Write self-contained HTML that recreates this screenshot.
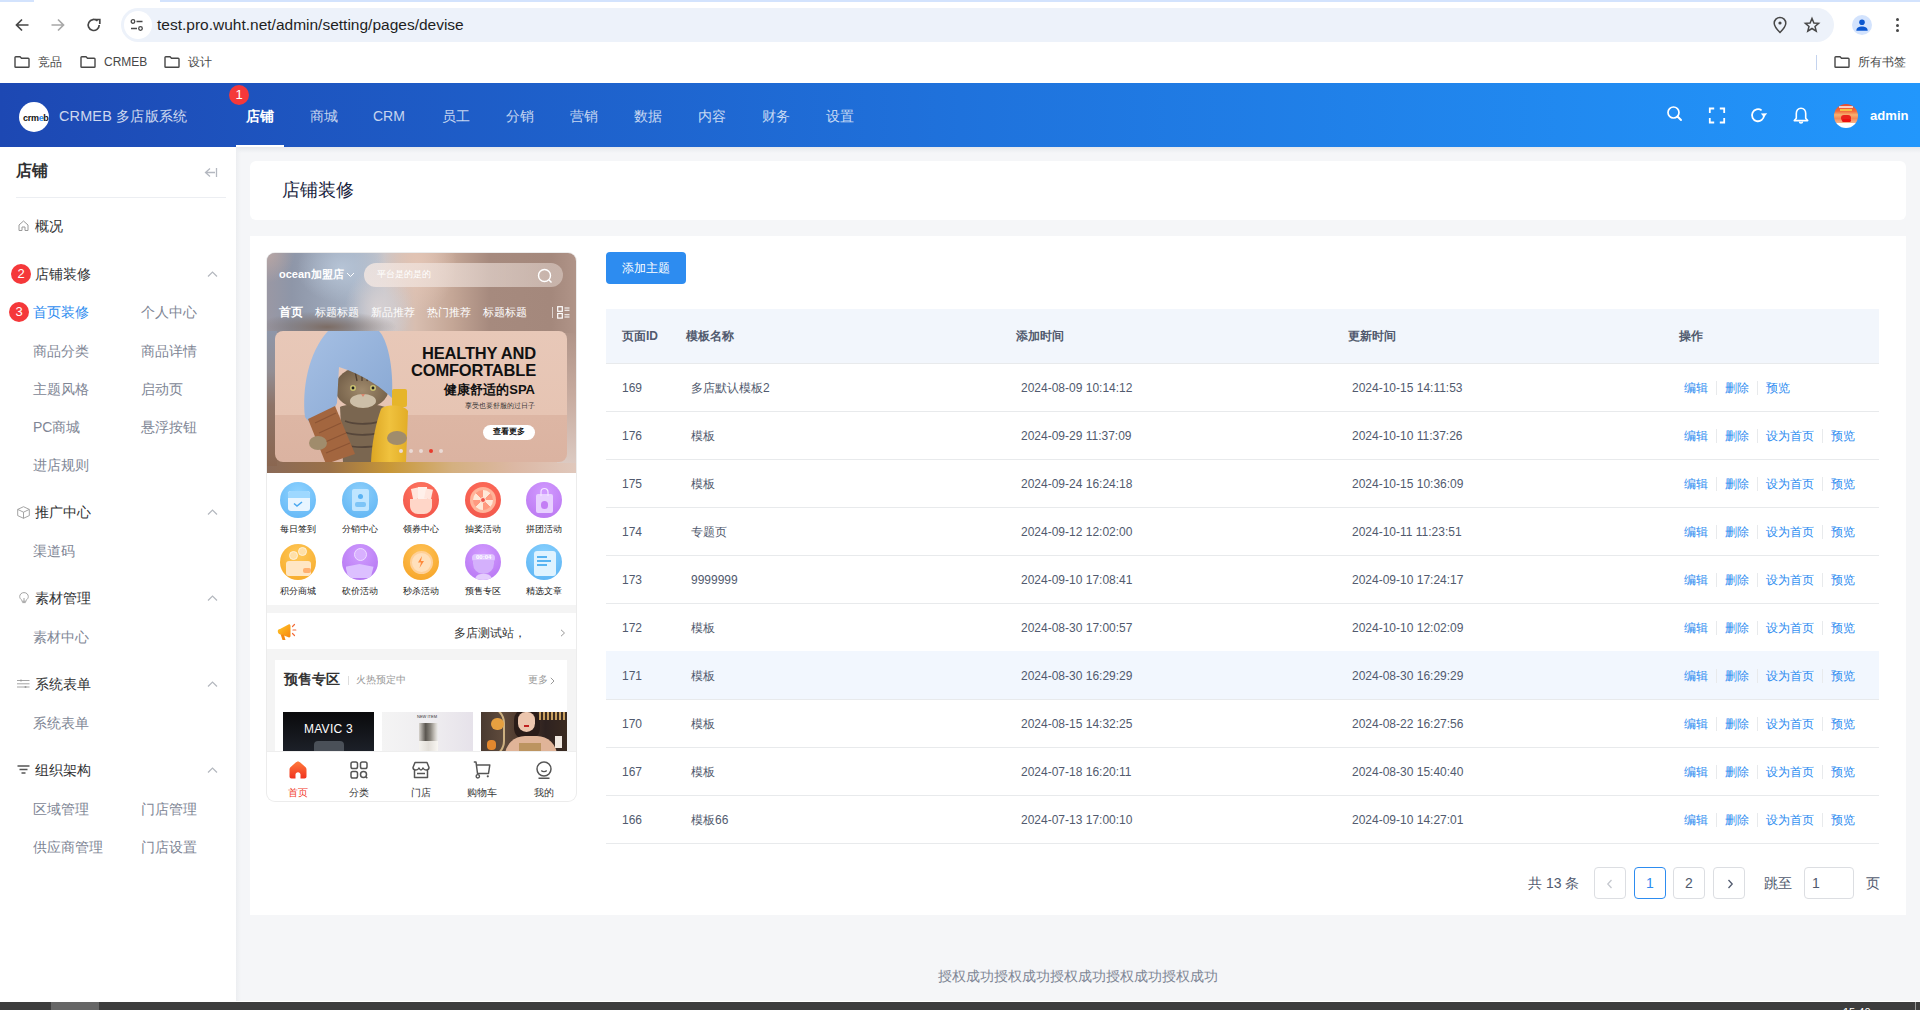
<!DOCTYPE html>
<html><head><meta charset="utf-8">
<style>
*{margin:0;padding:0;box-sizing:border-box}
html,body{width:1920px;height:1010px;overflow:hidden;background:#f5f6f8;font-family:"Liberation Sans",sans-serif;position:relative}
.a{position:absolute}
.t{position:absolute;white-space:nowrap;line-height:1}
svg{position:absolute;overflow:visible}
/* browser chrome */
#chrome{left:0;top:0;width:1920px;height:83px;background:#fff}
#tabstrip{left:0;top:0;width:1920px;height:2px;background:#d3e3fd}
#addr{left:121px;top:8px;width:1713px;height:34px;border-radius:17px;background:#edf2fa}
#header{left:0;top:83px;width:1920px;height:64px;background:linear-gradient(90deg,#1d48b3 0%,#1f72dc 50%,#2297fc 100%)}
#side{left:0;top:147px;width:236px;height:854px;background:#fff}
#taskbar{left:0;top:1002px;width:1920px;height:8px;background:#3d3d3d;overflow:hidden}
.si{font-size:14px}
.sub{color:#808695}
.badge{width:20px;height:20px;border-radius:10px;background:#f5383a;color:#fff;font-size:13px;line-height:20px;text-align:center}
.th{font-size:12px;font-weight:bold;color:#515a6e}
.td{font-size:12px;color:#515a6e}
.lk{font-size:12px;color:#2d8cf0}
.sep{width:1px;height:14px;background:#e8eaec}
.pg{width:32px;height:32px;border:1px solid #dcdee2;border-radius:4px;font-size:14px;line-height:30px;text-align:center;color:#515a6e}
.ptab{font-size:10px;color:#333}
.card{background:#fff;border-radius:6px}
</style></head>
<body>
<div id="chrome" class="a">
  <div id="tabstrip" class="a"></div>
  <div class="a" style="left:34px;top:0;width:126px;height:4px;background:#fff;border-radius:0 0 0 0"></div>
  <div id="addr" class="a"></div>
  <div class="a" style="left:124px;top:11px;width:28px;height:28px;border-radius:14px;background:#fff"></div>
  <div class="t" style="left:157px;top:17px;font-size:15.5px;color:#1f1f1f">test.pro.wuht.net/admin/setting/pages/devise</div>
  <div class="t" style="left:38px;top:56px;font-size:12px;color:#474747">竞品</div>
  <div class="t" style="left:104px;top:56px;font-size:12px;color:#474747">CRMEB</div>
  <div class="t" style="left:188px;top:56px;font-size:12px;color:#474747">设计</div>
  <div class="a" style="left:1816px;top:55px;width:1px;height:15px;background:#c4d3ee"></div>
  <div class="t" style="left:1858px;top:56px;font-size:12px;color:#474747">所有书签</div>

  <svg style="left:14px;top:17px" width="16" height="16" viewBox="0 0 16 16"><path d="M14.5 8H2.5M8 2.5L2.5 8L8 13.5" fill="none" stroke="#474747" stroke-width="1.7"/></svg>
  <svg style="left:50px;top:17px" width="16" height="16" viewBox="0 0 16 16"><path d="M1.5 8H13.5M8 2.5L13.5 8L8 13.5" fill="none" stroke="#a8a8a8" stroke-width="1.7"/></svg>
  <svg style="left:86px;top:17px" width="16" height="16" viewBox="0 0 16 16"><path d="M13.2 8A5.5 5.5 0 1 1 11.5 4" fill="none" stroke="#474747" stroke-width="1.7"/><path d="M9.2 2.5H13.8V7.1" fill="none" stroke="#474747" stroke-width="1.7"/></svg>
  <svg style="left:130px;top:18px" width="14" height="14" viewBox="0 0 14 14"><circle cx="3" cy="3.5" r="1.8" fill="none" stroke="#474747" stroke-width="1.3"/><path d="M6.5 3.5H12.5M1 10.5H7" stroke="#474747" stroke-width="1.4"/><circle cx="10.5" cy="10.5" r="1.8" fill="none" stroke="#474747" stroke-width="1.3"/></svg>
  <svg style="left:1773px;top:17px" width="14" height="17" viewBox="0 0 14 17"><path d="M7 15.5C7 15.5 1.2 9.6 1.2 6.2A5.8 5.8 0 0 1 12.8 6.2C12.8 9.6 7 15.5 7 15.5Z" fill="none" stroke="#474747" stroke-width="1.5"/><circle cx="7" cy="6" r="1.6" fill="#474747"/></svg>
  <svg style="left:1804px;top:17px" width="16" height="16" viewBox="0 0 16 16"><path d="M8 1.5L9.9 6L14.6 6.3L11 9.4L12.2 14.1L8 11.5L3.8 14.1L5 9.4L1.4 6.3L6.1 6Z" fill="none" stroke="#474747" stroke-width="1.5" stroke-linejoin="miter"/></svg>
  <div class="a" style="left:1852px;top:15px;width:20px;height:20px;border-radius:10px;background:#d3e3fd"></div>
  <svg style="left:1855px;top:18px" width="14" height="14" viewBox="0 0 14 14"><circle cx="7" cy="4.2" r="2.8" fill="#0b57d0"/><path d="M1.3 12.8C1.3 9.5 4 8.4 7 8.4S12.7 9.5 12.7 12.8Z" fill="#0b57d0"/></svg>
  <div class="a" style="left:1896px;top:18px;width:3px;height:3px;border-radius:2px;background:#474747"></div>
  <div class="a" style="left:1896px;top:23.5px;width:3px;height:3px;border-radius:2px;background:#474747"></div>
  <div class="a" style="left:1896px;top:29px;width:3px;height:3px;border-radius:2px;background:#474747"></div>
  <svg style="left:14px;top:56px" width="16" height="12" viewBox="0 0 16 12"><path d="M1 1.5C1 1 1.3 0.7 1.8 0.7H6L7.5 2.2H14.2C14.7 2.2 15 2.5 15 3V10.7C15 11.1 14.7 11.3 14.2 11.3H1.8C1.3 11.3 1 11.1 1 10.7Z" fill="none" stroke="#474747" stroke-width="1.4"/></svg>
  <svg style="left:80px;top:56px" width="16" height="12" viewBox="0 0 16 12"><path d="M1 1.5C1 1 1.3 0.7 1.8 0.7H6L7.5 2.2H14.2C14.7 2.2 15 2.5 15 3V10.7C15 11.1 14.7 11.3 14.2 11.3H1.8C1.3 11.3 1 11.1 1 10.7Z" fill="none" stroke="#474747" stroke-width="1.4"/></svg>
  <svg style="left:164px;top:56px" width="16" height="12" viewBox="0 0 16 12"><path d="M1 1.5C1 1 1.3 0.7 1.8 0.7H6L7.5 2.2H14.2C14.7 2.2 15 2.5 15 3V10.7C15 11.1 14.7 11.3 14.2 11.3H1.8C1.3 11.3 1 11.1 1 10.7Z" fill="none" stroke="#474747" stroke-width="1.4"/></svg>
  <svg style="left:1834px;top:56px" width="16" height="12" viewBox="0 0 16 12"><path d="M1 1.5C1 1 1.3 0.7 1.8 0.7H6L7.5 2.2H14.2C14.7 2.2 15 2.5 15 3V10.7C15 11.1 14.7 11.3 14.2 11.3H1.8C1.3 11.3 1 11.1 1 10.7Z" fill="none" stroke="#474747" stroke-width="1.4"/></svg>
</div>
<div id="header" class="a">
  <div class="a" style="left:19px;top:19px;width:30px;height:30px;border-radius:15px;background:#fff"></div>
  <div class="t" style="left:59px;top:26px;font-size:14.4px;letter-spacing:0.2px;color:rgba(255,255,255,.8)">CRMEB 多店版系统</div>
  <div class="t" style="left:246px;top:26px;font-size:14px;color:#fff;font-weight:bold">店铺</div>
  <div class="a" style="left:236px;top:62px;width:48px;height:2px;background:#fff"></div>
  <div class="t" style="left:23px;top:31px;font-size:9px;font-weight:bold;color:#111;letter-spacing:-0.3px">cr<span style="font-size:9px">m</span><span style="color:#2d8cf0">e</span>b</div>
  
  <svg style="left:1665px;top:105px;top:22px" width="18" height="18" viewBox="0 0 18 18"><circle cx="8.5" cy="7.5" r="5.5" fill="none" stroke="#fff" stroke-width="1.7"/><path d="M12.5 11.5L16 15" stroke="#fff" stroke-width="1.9" stroke-linecap="round"/></svg>
  <svg style="left:1708px;top:24px" width="18" height="17" viewBox="0 0 18 17"><path d="M1.8 6V1.5H6.2M11.8 1.5H16.2V6M16.2 11V15.5H11.8M6.2 15.5H1.8V11" fill="none" stroke="#fff" stroke-width="1.8"/></svg>
  <svg style="left:1750px;top:24px" width="18" height="16" viewBox="0 0 18 16"><path d="M14 8.5A6 6 0 1 1 11.6 3.4" fill="none" stroke="#fff" stroke-width="1.8"/><path d="M10.8 6.6L14 10.2L17.2 6.2Z" fill="#fff"/></svg>
  <svg style="left:1793px;top:24px" width="16" height="17" viewBox="0 0 16 17"><path d="M8 1.2C5 1.2 3.3 3.6 3.3 6.5V11.3L1.3 13.6H14.7L12.7 11.3V6.5C12.7 3.6 11 1.2 8 1.2Z" fill="none" stroke="#fff" stroke-width="1.6" stroke-linejoin="round"/><path d="M6.5 14.6A1.5 1.5 0 0 0 9.5 14.6" fill="none" stroke="#fff" stroke-width="1.5"/></svg>
  <div class="a badge" style="left:229px;top:2px">1</div>
  <div class="t" style="left:310px;top:26px;font-size:14px;color:rgba(255,255,255,.75)">商城</div>
  <div class="t" style="left:373px;top:26px;font-size:14px;color:rgba(255,255,255,.75)">CRM</div>
  <div class="t" style="left:442px;top:26px;font-size:14px;color:rgba(255,255,255,.75)">员工</div>
  <div class="t" style="left:506px;top:26px;font-size:14px;color:rgba(255,255,255,.75)">分销</div>
  <div class="t" style="left:570px;top:26px;font-size:14px;color:rgba(255,255,255,.75)">营销</div>
  <div class="t" style="left:634px;top:26px;font-size:14px;color:rgba(255,255,255,.75)">数据</div>
  <div class="t" style="left:698px;top:26px;font-size:14px;color:rgba(255,255,255,.75)">内容</div>
  <div class="t" style="left:762px;top:26px;font-size:14px;color:rgba(255,255,255,.75)">财务</div>
  <div class="t" style="left:826px;top:26px;font-size:14px;color:rgba(255,255,255,.75)">设置</div>
  <div class="a" style="left:1834px;top:21px;width:24px;height:24px;border-radius:12px;overflow:hidden;background:linear-gradient(180deg,#e84a2c 0%,#f36a3a 30%,#f6b070 45%,#f48a56 60%,#f7b48a 78%,#fff 79%)"><div class="a" style="left:5px;top:2px;width:14px;height:2px;background:#fff;opacity:.7"></div><div class="a" style="left:6px;top:5px;width:12px;height:2px;background:#f7c040"></div><div class="a" style="left:7px;top:11px;width:10px;height:6px;border-radius:5px;background:#e9231c"></div><div class="a" style="left:8px;top:15px;width:9px;height:3px;border-radius:2px;background:#ee1010"></div></div>
  <div class="t" style="left:1870px;top:25.5px;font-size:13.1px;font-weight:bold;color:#fff">admin</div>
</div>
<div id="side" class="a">
  <div class="t" style="left:16px;top:16px;font-size:16px;font-weight:bold;color:#303133">店铺</div>
  <svg style="left:204px;top:20px" width="14" height="11" viewBox="0 0 14 11"><path d="M6 1.5L1.5 5.5L6 9.5M1.5 5.5H11M12.5 1V10" fill="none" stroke="#b4b8c0" stroke-width="1.3"/></svg>
  <div class="a" style="left:16px;top:50px;width:210px;height:1px;background:#eceef2"></div>
  <svg style="left:18px;top:73px" width="11" height="11" viewBox="0 0 11 11"><path d="M1 5L5.5 1L10 5V10.5H7V7H4V10.5H1Z" fill="none" stroke="#9a9a9a" stroke-width="1"/></svg>
  <div class="t si" style="left:35px;top:72px;color:#303133">概况</div>

  <div class="a badge" style="left:11px;top:117px">2</div>
  <div class="t si" style="left:35px;top:120px;color:#303133">店铺装修</div>
  <svg style="left:207px;top:124px" width="11" height="6" viewBox="0 0 11 6"><path d="M1 5.5L5.5 1L10 5.5" fill="none" stroke="#b4b8bf" stroke-width="1.2"/></svg>
  <div class="a badge" style="left:9px;top:155px">3</div>
  <div class="t si" style="left:33px;top:158px;color:#2d8cf0">首页装修</div>
  <div class="t si sub" style="left:141px;top:158px">个人中心</div>
  <div class="t si sub" style="left:33px;top:197px">商品分类</div>
  <div class="t si sub" style="left:141px;top:197px">商品详情</div>
  <div class="t si sub" style="left:33px;top:235px">主题风格</div>
  <div class="t si sub" style="left:141px;top:235px">启动页</div>
  <div class="t si sub" style="left:33px;top:273px">PC商城</div>
  <div class="t si sub" style="left:141px;top:273px">悬浮按钮</div>
  <div class="t si sub" style="left:33px;top:311px">进店规则</div>

  <svg style="left:17px;top:359px" width="13" height="13" viewBox="0 0 13 13"><path d="M6.5 0.7L12.3 3.4V9.6L6.5 12.3L0.7 9.6V3.4Z M0.7 3.4L6.5 6.2L12.3 3.4 M6.5 6.2V12.3" fill="none" stroke="#9a9a9a" stroke-width="0.9"/></svg>
  <div class="t si" style="left:35px;top:358px;color:#303133">推广中心</div>
  <svg style="left:207px;top:362px" width="11" height="6" viewBox="0 0 11 6"><path d="M1 5.5L5.5 1L10 5.5" fill="none" stroke="#b4b8bf" stroke-width="1.2"/></svg>
  <div class="t si sub" style="left:33px;top:397px">渠道码</div>

  <svg style="left:19px;top:445px" width="10" height="12" viewBox="0 0 10 12"><path d="M5 0.6C2.5 0.6 0.7 2.4 0.7 4.6C0.7 6.3 1.8 7.3 2.9 8.3V9.3H7.1V8.3C8.2 7.3 9.3 6.3 9.3 4.6C9.3 2.4 7.5 0.6 5 0.6Z M3.3 10.6H6.7 M5 9.3V6" fill="none" stroke="#9a9a9a" stroke-width="0.9"/></svg>
  <div class="t si" style="left:35px;top:444px;color:#303133">素材管理</div>
  <svg style="left:207px;top:448px" width="11" height="6" viewBox="0 0 11 6"><path d="M1 5.5L5.5 1L10 5.5" fill="none" stroke="#b4b8bf" stroke-width="1.2"/></svg>
  <div class="t si sub" style="left:33px;top:483px">素材中心</div>

  <svg style="left:17px;top:532px" width="13" height="10" viewBox="0 0 13 10"><path d="M0 1.5H12.5 M0 8H12.5 M0 4.8H12.5" fill="none" stroke="#9a9a9a" stroke-width="0.9"/><circle cx="4" cy="1.5" r="1" fill="#9a9a9a"/><circle cx="8.5" cy="8" r="1" fill="#9a9a9a"/></svg>
  <div class="t si" style="left:35px;top:530px;color:#303133">系统表单</div>
  <svg style="left:207px;top:534px" width="11" height="6" viewBox="0 0 11 6"><path d="M1 5.5L5.5 1L10 5.5" fill="none" stroke="#b4b8bf" stroke-width="1.2"/></svg>
  <div class="t si sub" style="left:33px;top:569px">系统表单</div>

  <svg style="left:17px;top:618px" width="13" height="9" viewBox="0 0 13 9"><path d="M0.5 1H12.5 M2.5 4.5H10.5 M4.5 8H8.5" fill="none" stroke="#555" stroke-width="1.4"/></svg>
  <div class="t si" style="left:35px;top:616px;color:#303133">组织架构</div>
  <svg style="left:207px;top:620px" width="11" height="6" viewBox="0 0 11 6"><path d="M1 5.5L5.5 1L10 5.5" fill="none" stroke="#b4b8bf" stroke-width="1.2"/></svg>
  <div class="t si sub" style="left:33px;top:655px">区域管理</div>
  <div class="t si sub" style="left:141px;top:655px">门店管理</div>
  <div class="t si sub" style="left:33px;top:693px">供应商管理</div>
  <div class="t si sub" style="left:141px;top:693px">门店设置</div>
</div>
</div>
<div class="a card" style="left:250px;top:161px;width:1656px;height:59px"></div>
<div class="t" style="left:282px;top:181px;font-size:18px;color:#17233d">店铺装修</div>
<div class="a card" style="left:250px;top:236px;width:1656px;height:679px;border-radius:0"></div>
<!--PHONE-->
<div class="a" id="phone" style="left:267px;top:253px;width:309px;height:548px;border-radius:8px;overflow:hidden;background:#fff;box-shadow:0 0 0 1px #ececec">
  <div class="a" style="left:0;top:0;width:309px;height:220px;background:
    radial-gradient(ellipse 28px 30px at 0px 0px,#b8a6a4 0%,rgba(184,166,164,0) 100%),
    radial-gradient(ellipse 70px 16px at 60px 74px,#7c6c64 0%,rgba(124,108,100,0) 100%),
    radial-gradient(ellipse 34px 40px at 112px 55px,#d6d0d2 0%,rgba(214,208,210,0) 100%),
    radial-gradient(ellipse 45px 35px at 75px 15px,#b6c4d6 0%,rgba(182,196,214,0) 100%),
    radial-gradient(ellipse 40px 50px at 150px 10px,#e2c4b4 0%,rgba(226,196,180,0) 100%),
    radial-gradient(ellipse 30px 60px at 300px 150px,#d8c4bc 0%,rgba(216,196,188,0) 100%),
    linear-gradient(90deg,#9a98a4 0%,#8e96a8 8%,#a4b0c2 28%,#c6c6cc 38%,#d8beb0 48%,#c4a696 60%,#a68a7e 72%,#a4887c 92%,#b09488 100%)"></div>
  <div class="a" style="left:0;top:200px;width:309px;height:20px;background:linear-gradient(90deg,#8a6a58 0%,#9a7048 20%,#c89838 40%,#d4b080 60%,#dcb8a4 80%,#e0c8bc 100%)"></div>
  <div class="a" style="left:290px;top:80px;width:19px;height:130px;background:linear-gradient(180deg,#b09488 0%,#c8aca0 50%,#dccac2 100%)"></div>
  <div class="a" style="left:0;top:78px;width:10px;height:135px;background:linear-gradient(180deg,#8e96a8 0%,#928e94 30%,#8e7468 55%,#8a6650 100%)"></div>
  <div class="t" style="left:12px;top:16px;font-size:11px;font-weight:bold;color:#fff">ocean加盟店</div>
  <svg style="left:79px;top:19px" width="9" height="6" viewBox="0 0 9 6"><path d="M1 1L4.5 4.5L8 1" fill="none" stroke="#fff" stroke-width="1"/></svg>
  <div class="a" style="left:97px;top:10px;width:199px;height:24px;border-radius:12px;background:linear-gradient(90deg,rgba(245,232,226,.8),rgba(220,205,198,.6))"></div>
  <div class="t" style="left:110px;top:17px;font-size:9px;color:#fff">平台是的是的</div>
  <svg style="left:270px;top:15px" width="16" height="16" viewBox="0 0 16 16"><circle cx="7.5" cy="7.5" r="6" fill="none" stroke="#fff" stroke-width="1.4"/><path d="M12 12L14.5 14.5" stroke="#fff" stroke-width="1.4"/></svg>
  <div class="t" style="left:12px;top:53px;font-size:12px;font-weight:bold;color:#fff">首页</div>
  <div class="t" style="left:48px;top:54px;font-size:11px;color:#fff">标题标题</div>
  <div class="t" style="left:104px;top:54px;font-size:11px;color:#fff">新品推荐</div>
  <div class="t" style="left:160px;top:54px;font-size:11px;color:#fff">热门推荐</div>
  <div class="t" style="left:216px;top:54px;font-size:11px;color:#fff">标题标题</div>
  <div class="a" style="left:285px;top:54px;width:1px;height:11px;background:rgba(255,255,255,.6)"></div>
  <svg style="left:290px;top:53px" width="13" height="13" viewBox="0 0 13 13"><rect x="0.7" y="0.7" width="4.6" height="4.6" fill="none" stroke="#fff" stroke-width="1.2"/><rect x="0.7" y="7.5" width="4.6" height="4.6" fill="none" stroke="#fff" stroke-width="1.2"/><path d="M7.5 2H12.5M7.5 4.3H12.5M7.5 8.7H12.5M7.5 11H12.5" stroke="#fff" stroke-width="1.1"/></svg>
  <!-- banner -->
  <div class="a" style="left:8px;top:78px;width:292px;height:131px;border-radius:8px;overflow:hidden;background:linear-gradient(180deg,#e8c8b8 0%,#e6c4b3 64%,#ddb6a4 64.5%,#dbb3a1 100%)">
    <svg style="left:0;top:0" width="292" height="131" viewBox="0 0 292 131">
      <defs>
        <linearGradient id="tw" x1="0" y1="0" x2="1" y2="1"><stop offset="0" stop-color="#a6c0e4"/><stop offset="1" stop-color="#86a6d2"/></linearGradient>
        <linearGradient id="bt" x1="0" y1="0" x2="1" y2="0"><stop offset="0" stop-color="#dca624"/><stop offset=".5" stop-color="#f0c23e"/><stop offset="1" stop-color="#e2ad26"/></linearGradient>
        <radialGradient id="fc" cx=".5" cy=".55" r=".6"><stop offset="0" stop-color="#a08a6c"/><stop offset="1" stop-color="#6e5a44"/></radialGradient>
      </defs>
      <path d="M68 131 L65 76 C72 72 104 72 112 77 L114 131 Z" fill="#7a6650"/>
      <path d="M70 90 C80 94 100 94 110 88 M69 101 C80 105 100 105 111 99 M70 114 C80 117 100 117 112 112" fill="none" stroke="#56463a" stroke-width="1.8"/>
      <ellipse cx="87" cy="57" rx="27" ry="21" fill="url(#fc)"/>
      <path d="M80 40 L82 50 M87 40 L87 50 M94 41 L92 50" stroke="#4e3e30" stroke-width="1.3"/>
      <ellipse cx="88" cy="70" rx="13" ry="7" fill="#cdbfa8"/>
      <circle cx="78" cy="57" r="3" fill="#c8c070"/><circle cx="98" cy="57" r="3" fill="#c8c070"/>
      <circle cx="78" cy="57" r="1.4" fill="#222"/><circle cx="98" cy="57" r="1.4" fill="#222"/>
      <path d="M86 63 L90 63 L88 66 Z" fill="#d8866e"/>
      <path d="M53 0 L104 0 C112 8 119 35 117 67 C108 58 90 44 64 36 L62 72 L50 96 C42 97 34 92 30 86 C27 58 33 22 53 0 Z" fill="url(#tw)"/>
      <path d="M33 88 L60 75 L80 123 L51 133 Z" fill="#a3663f"/>
      <path d="M40 92 L61 82 M44 102 L66 92 M48 112 L71 102 M51 122 L75 112" stroke="#8c5434" stroke-width="1.2"/>
      <ellipse cx="43" cy="112" rx="9" ry="7" fill="#a08c6c"/>
      <rect x="117" y="58" width="15" height="18" rx="2" fill="#e6b52a"/>
      <path d="M106 78 C109 73 129 73 133 80 L131 131 L96 131 C97 110 101 92 106 78 Z" fill="url(#bt)"/>
      <ellipse cx="122" cy="107" rx="10" ry="7" fill="#a08c6c"/>
    </svg>
    <div class="t" style="left:146px;top:14px;width:115px;text-align:right;font-size:16.5px;font-weight:bold;color:#111;letter-spacing:-0.2px">HEALTHY AND</div>
    <div class="t" style="left:126px;top:31px;width:135px;text-align:right;font-size:16.5px;font-weight:bold;color:#111;letter-spacing:-0.2px">COMFORTABLE</div>
    <div class="t" style="left:160px;top:52px;width:100px;text-align:right;font-size:13px;font-weight:bold;color:#111">健康舒适的SPA</div>
    <div class="t" style="left:180px;top:71px;width:80px;text-align:right;font-size:7px;color:#333">享受也要舒服的过日子</div>
    <div class="a" style="left:208px;top:94px;width:52px;height:15px;border-radius:8px;background:#fff"></div>
    <div class="t" style="left:208px;top:97px;width:52px;text-align:center;font-size:8px;font-weight:bold;color:#111">查看更多</div>
    <div class="a" style="left:124px;top:118px;width:4px;height:4px;border-radius:2px;background:#eadbd6"></div>
    <div class="a" style="left:134px;top:118px;width:4px;height:4px;border-radius:2px;background:#eadbd6"></div>
    <div class="a" style="left:144px;top:118px;width:4px;height:4px;border-radius:2px;background:#eadbd6"></div>
    <div class="a" style="left:154px;top:118px;width:4px;height:4px;border-radius:2px;background:#e83a2c"></div>
    <div class="a" style="left:164px;top:118px;width:4px;height:4px;border-radius:2px;background:#eadbd6"></div>
  </div>
  <div class="a" style="left:13px;top:229px;width:36px;height:36px;border-radius:18px;background:radial-gradient(circle at 50% 30%,#8fd3ff,#5eb4f5);overflow:hidden"><div class="a" style="left:8px;top:9px;width:22px;height:20px;border-radius:3px;background:#e8f5ff"></div><div class="a" style="left:8px;top:9px;width:22px;height:7px;border-radius:3px 3px 0 0;background:#9ed8ff"></div><svg style="left:13px;top:19px" width="10" height="6" viewBox="0 0 10 6"><path d="M1 2.5L4 5L9 1" fill="none" stroke="#4aa8f0" stroke-width="1.6"/></svg></div>
<div class="t" style="left:13px;top:272px;width:36px;text-align:center;font-size:9px;color:#222">每日签到</div>
<div class="a" style="left:74.5px;top:229px;width:36px;height:36px;border-radius:18px;background:radial-gradient(circle at 50% 30%,#8fd0fb,#5ab2f3);overflow:hidden"><div class="a" style="left:10px;top:7px;width:17px;height:22px;border-radius:2px;background:#bfe5ff"></div><div class="a" style="left:16px;top:12px;width:5px;height:5px;border-radius:3px;background:#5ab2f3"></div><div class="a" style="left:13px;top:20px;width:11px;height:5px;border-radius:2px;background:#7cc4f7"></div></div>
<div class="t" style="left:74.5px;top:272px;width:36px;text-align:center;font-size:9px;color:#222">分销中心</div>
<div class="a" style="left:136px;top:229px;width:36px;height:36px;border-radius:18px;background:radial-gradient(circle at 50% 30%,#ff7a64,#f04e44);overflow:hidden"><div class="a" style="left:7px;top:17px;width:22px;height:15px;border-radius:0 0 8px 8px;background:#ffd6c8"></div><div class="a" style="left:9px;top:6px;width:8px;height:11px;background:#ffe5dc;transform:rotate(-12deg)"></div><div class="a" style="left:15px;top:5px;width:9px;height:12px;background:#fff0ea"></div><div class="a" style="left:22px;top:7px;width:7px;height:10px;background:#ffe5dc;transform:rotate(12deg)"></div></div>
<div class="t" style="left:136px;top:272px;width:36px;text-align:center;font-size:9px;color:#222">领券中心</div>
<div class="a" style="left:198px;top:229px;width:36px;height:36px;border-radius:18px;background:radial-gradient(circle at 50% 30%,#ff6e5a,#f0544a);overflow:hidden"><div class="a" style="left:5px;top:5px;width:26px;height:26px;border-radius:13px;background:#ffb49a"></div><div class="a" style="left:8px;top:8px;width:20px;height:20px;border-radius:10px;background:conic-gradient(#ffe8d8 0 45deg,#ff9a80 45deg 90deg,#ffe8d8 90deg 135deg,#ff9a80 135deg 180deg,#ffe8d8 180deg 225deg,#ff9a80 225deg 270deg,#ffe8d8 270deg 315deg,#ff9a80 315deg)"></div><div class="a" style="left:15px;top:15px;width:6px;height:6px;border-radius:3px;background:#f0544a;border:1px solid #ffe0d0"></div></div>
<div class="t" style="left:198px;top:272px;width:36px;text-align:center;font-size:9px;color:#222">抽奖活动</div>
<div class="a" style="left:259px;top:229px;width:36px;height:36px;border-radius:18px;background:radial-gradient(circle at 50% 30%,#d29bff,#b874f0);overflow:hidden"><div class="a" style="left:10px;top:12px;width:17px;height:19px;border-radius:2px;background:#e8d0ff"></div><svg style="left:13px;top:6px" width="11" height="8" viewBox="0 0 11 8"><path d="M2 8V4A3.5 3.5 0 0 1 9 4V8" fill="none" stroke="#f3e6ff" stroke-width="1.2"/></svg><div class="a" style="left:15px;top:19px;width:7px;height:8px;border-radius:4px 4px 4px 4px;background:#c47ef5"></div></div>
<div class="t" style="left:259px;top:272px;width:36px;text-align:center;font-size:9px;color:#222">拼团活动</div>
<div class="a" style="left:13px;top:291px;width:36px;height:36px;border-radius:18px;background:radial-gradient(circle at 50% 30%,#ffc95a,#f5a623);overflow:hidden"><div class="a" style="left:6px;top:17px;width:25px;height:15px;border-radius:3px;background:#ffe6c4"></div><div class="a" style="left:9px;top:7px;width:9px;height:9px;border-radius:5px;background:#ffe0a8;border:1px solid #fff1d6"></div><div class="a" style="left:18px;top:3px;width:9px;height:9px;border-radius:5px;background:#ffe0a8;border:1px solid #fff1d6"></div><div class="a" style="left:23px;top:24px;width:8px;height:5px;border-radius:2px;background:#ffb070"></div></div>
<div class="t" style="left:13px;top:334px;width:36px;text-align:center;font-size:9px;color:#222">积分商城</div>
<div class="a" style="left:74.5px;top:291px;width:36px;height:36px;border-radius:18px;background:radial-gradient(circle at 50% 30%,#d09cff,#b070ef);overflow:hidden"><div class="a" style="left:12px;top:4px;width:13px;height:13px;border-radius:7px;background:#d8b0ff;border:1.5px solid #ecdcff"></div><div class="a" style="left:4px;top:20px;width:28px;height:14px;background:#dcc0ff;clip-path:polygon(0 20%,50% 0,100% 20%,90% 100%,10% 100%)"></div></div>
<div class="t" style="left:74.5px;top:334px;width:36px;text-align:center;font-size:9px;color:#222">砍价活动</div>
<div class="a" style="left:136px;top:291px;width:36px;height:36px;border-radius:18px;background:radial-gradient(circle at 50% 30%,#ffc45a,#f5a020);overflow:hidden"><div class="a" style="left:7px;top:7px;width:23px;height:23px;border-radius:12px;background:#ffe0bc;border:2px solid #ffd098"></div><svg style="left:14px;top:12px" width="8" height="12" viewBox="0 0 8 12"><path d="M5 0L1 6.5H4L2.5 12L7 5H4Z" fill="#ff8a3c"/></svg></div>
<div class="t" style="left:136px;top:334px;width:36px;text-align:center;font-size:9px;color:#222">秒杀活动</div>
<div class="a" style="left:198px;top:291px;width:36px;height:36px;border-radius:18px;background:radial-gradient(circle at 50% 30%,#d39cff,#b472f2);overflow:hidden"><div class="a" style="left:7px;top:10px;width:23px;height:8px;border-radius:12px;background:#e0c4ff"></div><div class="t" style="left:11px;top:10px;font-size:6px;color:#fff;font-weight:bold">00:04</div><div class="a" style="left:8px;top:16px;width:21px;height:14px;border-radius:0 0 11px 11px;background:#d4b0fc"></div><div class="a" style="left:10px;top:30px;width:17px;height:6px;border-radius:8px 8px 0 0;background:#e4cdfd"></div></div>
<div class="t" style="left:198px;top:334px;width:36px;text-align:center;font-size:9px;color:#222">预售专区</div>
<div class="a" style="left:259px;top:291px;width:36px;height:36px;border-radius:18px;background:radial-gradient(circle at 50% 30%,#8cd3ff,#56b0f2);overflow:hidden"><div class="a" style="left:8px;top:7px;width:22px;height:25px;border-radius:3px;background:#dff3ff"></div><div class="a" style="left:11px;top:12px;width:10px;height:2px;background:#57b4f2"></div><div class="a" style="left:11px;top:16px;width:14px;height:2px;background:#57b4f2"></div><div class="a" style="left:11px;top:20px;width:10px;height:2px;background:#57b4f2"></div></div>
<div class="t" style="left:259px;top:334px;width:36px;text-align:center;font-size:9px;color:#222">精选文章</div>
  <div class="a" style="left:0;top:352px;width:309px;height:8px;background:#f4f4f4"></div>
  <svg style="left:10px;top:370px" width="19" height="18" viewBox="0 0 19 18"><defs><linearGradient id="mg" x1="0" y1="0" x2="1" y2="1"><stop offset="0" stop-color="#ffc828"/><stop offset="1" stop-color="#f7870f"/></linearGradient></defs><path d="M0.8 8.5C0.6 7 1.5 6.2 3 6L11.5 1.5C12.5 1 13.5 1.8 13.5 3V13C13.5 14.2 12.5 14.8 11.5 14.3L4 11.5C2.2 11.5 1 10.3 0.8 8.5Z" fill="url(#mg)"/><path d="M3.5 11L5.5 17H8.5L7 12Z" fill="#f58a12"/><path d="M15.5 3.5L17.5 1.5M16 7H18.8M15.5 10.5L17.5 12.5" stroke="#f26b3a" stroke-width="1.2" stroke-linecap="round"/></svg>
  <div class="t" style="left:187px;top:374px;font-size:12px;color:#333">多店测试站，</div>
  <svg style="left:293px;top:376px" width="6" height="8" viewBox="0 0 6 8"><path d="M1 0.8L4.5 4L1 7.2" fill="none" stroke="#999" stroke-width="1"/></svg>
  <div class="a" style="left:0;top:396px;width:309px;height:11px;background:#f4f4f4"></div>
  <div class="a" style="left:0;top:407px;width:8px;height:91px;background:#f4f4f4"></div>
  <div class="a" style="left:300px;top:407px;width:9px;height:91px;background:#f4f4f4"></div>
  <div class="t" style="left:17px;top:419px;font-size:14px;font-weight:bold;color:#333"><span style="color:#333">预</span>售专区</div>
  <div class="a" style="left:81px;top:423px;width:1px;height:9px;background:#ddd"></div>
  <div class="t" style="left:89px;top:422px;font-size:10px;color:#999">火热预定中</div>
  <div class="t" style="left:261px;top:422px;font-size:10px;color:#999">更多</div>
  <svg style="left:283px;top:424px" width="5" height="8" viewBox="0 0 5 8"><path d="M0.8 0.8L4 4L0.8 7.2" fill="none" stroke="#999" stroke-width="1"/></svg>
  <div class="a" style="left:16px;top:459px;width:91px;height:39px;background:linear-gradient(180deg,#0a0a0c,#1c2028)"></div>
  <div class="t" style="left:16px;top:470px;width:91px;text-align:center;font-size:12px;color:#fff;letter-spacing:0.3px">MAVIC 3</div>
  <div class="a" style="left:47px;top:488px;width:30px;height:10px;border-radius:4px 4px 0 0;background:#4a5058"></div>
  <div class="a" style="left:115px;top:459px;width:91px;height:39px;background:linear-gradient(90deg,#f4f4f4,#eeecef 60%,#e6e2ea)"></div>
  <div class="a" style="left:152px;top:470px;width:19px;height:18px;background:linear-gradient(90deg,#d8d4ce,#5a5650 35%,#8a867e 60%,#d0ccc6 85%,#eee)"></div>
  <div class="a" style="left:152px;top:488px;width:19px;height:10px;background:linear-gradient(90deg,#f4f2ee,#e2ded8 50%,#f8f6f2)"></div>
  <div class="t" style="left:150px;top:462px;font-size:4px;color:#333">NEW ITEM</div>
  <div class="a" style="left:214px;top:459px;width:86px;height:39px;overflow:hidden;background:linear-gradient(90deg,#4a3a30 0%,#5e4a3c 25%,#4a3428 50%,#2e2220 75%,#3a2a20 100%)">
    <div class="a" style="left:-10px;top:-6px;width:34px;height:52px;border-radius:26px;border:2px solid #cdb080"></div>
    <div class="a" style="left:10px;top:6px;width:13px;height:12px;border-radius:6px;background:#e6a040"></div>
    <div class="a" style="left:6px;top:28px;width:9px;height:10px;border-radius:4px;background:#e4882e"></div>
    <div class="a" style="left:33px;top:-4px;width:26px;height:32px;border-radius:12px;background:#2a1c18"></div>
    <div class="a" style="left:37px;top:0px;width:17px;height:20px;border-radius:8px 8px 9px 9px;background:#ecc6ae"></div>
    <div class="a" style="left:43px;top:13px;width:5px;height:2px;background:#c02020"></div>
    <div class="a" style="left:24px;top:24px;width:52px;height:20px;border-radius:22px 22px 0 0;background:#e0b498"></div>
    <div class="a" style="left:38px;top:31px;width:22px;height:10px;background:#bc9460"></div>
    <div class="a" style="left:58px;top:0px;width:28px;height:8px;background:repeating-linear-gradient(90deg,#c8a060 0 2px,#3a2a20 2px 4px)"></div>
    <div class="a" style="left:74px;top:24px;width:7px;height:12px;background:#f0e8e0"></div>
  </div>
  <div class="a" style="left:0;top:498px;width:309px;height:1px;background:#eee"></div>
  
<svg style="left:22px;top:508px" width="18" height="18" viewBox="0 0 18 18"><defs><linearGradient id="hg" x1="0" y1="0" x2="0" y2="1"><stop offset="0" stop-color="#ff7a3c"/><stop offset="1" stop-color="#f0321e"/></linearGradient></defs><path d="M9 0.5C8 0.5 7.2 1.1 6.4 1.8L1.4 6.2C0.8 6.8 0.5 7.6 0.5 8.5V15.5C0.5 16.6 1.3 17.5 2.5 17.5H6.5V13.5C6.5 12.2 7.6 11.2 9 11.2S11.5 12.2 11.5 13.5V17.5H15.5C16.7 17.5 17.5 16.6 17.5 15.5V8.5C17.5 7.6 17.2 6.8 16.6 6.2L11.6 1.8C10.8 1.1 10 0.5 9 0.5Z" fill="url(#hg)"/></svg>
<svg style="left:83px;top:508px" width="18" height="18" viewBox="0 0 18 18"><rect x="1" y="1" width="6.5" height="6.5" rx="1.8" fill="none" stroke="#555" stroke-width="1.5"/><rect x="10.5" y="1" width="6.5" height="6.5" rx="1.8" fill="none" stroke="#555" stroke-width="1.5"/><rect x="1" y="10.5" width="6.5" height="6.5" rx="1.8" fill="none" stroke="#555" stroke-width="1.5"/><circle cx="13.5" cy="13.5" r="3" fill="none" stroke="#555" stroke-width="1.5"/><path d="M15.8 15.8L17.3 17.3" stroke="#555" stroke-width="1.5"/></svg>
<svg style="left:145px;top:508px" width="18" height="18" viewBox="0 0 18 18"><path d="M2.5 8V16.5H15.5V8M1 6.5L3 1.5H15L17 6.5C17 8 15.5 9 14 9C12.5 9 11.5 8 11 7C10.5 8 9.8 9 9 9C8.2 9 7.5 8 7 7C6.5 8 5.5 9 4 9C2.5 9 1 8 1 6.5Z M5 12.5H13" fill="none" stroke="#555" stroke-width="1.5" stroke-linejoin="round"/></svg>
<svg style="left:206px;top:508px" width="18" height="18" viewBox="0 0 18 18"><path d="M0.8 1H3L4.5 12.5H15.5L16.8 4H4" fill="none" stroke="#555" stroke-width="1.5" stroke-linejoin="round"/><circle cx="4.8" cy="15.3" r="1.7" fill="none" stroke="#555" stroke-width="1.4"/><circle cx="14.8" cy="15.3" r="1.1" fill="#555"/></svg>
<svg style="left:268px;top:508px" width="18" height="18" viewBox="0 0 18 18"><circle cx="9" cy="8" r="7" fill="none" stroke="#555" stroke-width="1.5"/><path d="M6.3 9.5C7.5 11 10.5 11 11.7 9.5M3.5 17.3H14.5" fill="none" stroke="#555" stroke-width="1.4"/></svg>
<div class="t ptab" style="left:21px;top:535px;color:#f23a2a">首页</div>
<div class="t ptab" style="left:82px;top:535px">分类</div>
<div class="t ptab" style="left:144px;top:535px">门店</div>
<div class="t ptab" style="left:200px;top:535px">购物车</div>
<div class="t ptab" style="left:267px;top:535px">我的</div>

</div>
<!--/PHONE-->
<!--TABLE-->
<div class="a" style="left:606px;top:252px;width:80px;height:32px;border-radius:4px;background:#2d8cf0"></div>
<div class="t" style="left:622px;top:262px;font-size:12px;color:#fff">添加主题</div>
<div class="a" style="left:606px;top:309px;width:1273px;height:55px;background:#f2f6fc;border-bottom:1px solid #e8eaec"></div>
<div class="t th" style="left:622px;top:330px">页面ID</div>
<div class="t th" style="left:686px;top:330px">模板名称</div>
<div class="t th" style="left:1016px;top:330px">添加时间</div>
<div class="t th" style="left:1348px;top:330px">更新时间</div>
<div class="t th" style="left:1679px;top:330px">操作</div>
<div class="a" style="left:606px;top:411px;width:1273px;height:1px;background:#e8eaec"></div>
<div class="t td" style="left:622px;top:382px">169</div>
<div class="t td" style="left:691px;top:382px">多店默认模板2</div>
<div class="t td" style="left:1021px;top:382px">2024-08-09 10:14:12</div>
<div class="t td" style="left:1352px;top:382px">2024-10-15 14:11:53</div>
<div class="t lk" style="left:1684px;top:382px">编辑</div>
<div class="a sep" style="left:1716px;top:381px"></div>
<div class="t lk" style="left:1725px;top:382px">删除</div>
<div class="a sep" style="left:1757px;top:381px"></div>
<div class="t lk" style="left:1766px;top:382px">预览</div>
<div class="a" style="left:606px;top:459px;width:1273px;height:1px;background:#e8eaec"></div>
<div class="t td" style="left:622px;top:430px">176</div>
<div class="t td" style="left:691px;top:430px">模板</div>
<div class="t td" style="left:1021px;top:430px">2024-09-29 11:37:09</div>
<div class="t td" style="left:1352px;top:430px">2024-10-10 11:37:26</div>
<div class="t lk" style="left:1684px;top:430px">编辑</div>
<div class="a sep" style="left:1716px;top:429px"></div>
<div class="t lk" style="left:1725px;top:430px">删除</div>
<div class="a sep" style="left:1757px;top:429px"></div>
<div class="t lk" style="left:1766px;top:430px">设为首页</div>
<div class="a sep" style="left:1822px;top:429px"></div>
<div class="t lk" style="left:1831px;top:430px">预览</div>
<div class="a" style="left:606px;top:507px;width:1273px;height:1px;background:#e8eaec"></div>
<div class="t td" style="left:622px;top:478px">175</div>
<div class="t td" style="left:691px;top:478px">模板</div>
<div class="t td" style="left:1021px;top:478px">2024-09-24 16:24:18</div>
<div class="t td" style="left:1352px;top:478px">2024-10-15 10:36:09</div>
<div class="t lk" style="left:1684px;top:478px">编辑</div>
<div class="a sep" style="left:1716px;top:477px"></div>
<div class="t lk" style="left:1725px;top:478px">删除</div>
<div class="a sep" style="left:1757px;top:477px"></div>
<div class="t lk" style="left:1766px;top:478px">设为首页</div>
<div class="a sep" style="left:1822px;top:477px"></div>
<div class="t lk" style="left:1831px;top:478px">预览</div>
<div class="a" style="left:606px;top:555px;width:1273px;height:1px;background:#e8eaec"></div>
<div class="t td" style="left:622px;top:526px">174</div>
<div class="t td" style="left:691px;top:526px">专题页</div>
<div class="t td" style="left:1021px;top:526px">2024-09-12 12:02:00</div>
<div class="t td" style="left:1352px;top:526px">2024-10-11 11:23:51</div>
<div class="t lk" style="left:1684px;top:526px">编辑</div>
<div class="a sep" style="left:1716px;top:525px"></div>
<div class="t lk" style="left:1725px;top:526px">删除</div>
<div class="a sep" style="left:1757px;top:525px"></div>
<div class="t lk" style="left:1766px;top:526px">设为首页</div>
<div class="a sep" style="left:1822px;top:525px"></div>
<div class="t lk" style="left:1831px;top:526px">预览</div>
<div class="a" style="left:606px;top:603px;width:1273px;height:1px;background:#e8eaec"></div>
<div class="t td" style="left:622px;top:574px">173</div>
<div class="t td" style="left:691px;top:574px">9999999</div>
<div class="t td" style="left:1021px;top:574px">2024-09-10 17:08:41</div>
<div class="t td" style="left:1352px;top:574px">2024-09-10 17:24:17</div>
<div class="t lk" style="left:1684px;top:574px">编辑</div>
<div class="a sep" style="left:1716px;top:573px"></div>
<div class="t lk" style="left:1725px;top:574px">删除</div>
<div class="a sep" style="left:1757px;top:573px"></div>
<div class="t lk" style="left:1766px;top:574px">设为首页</div>
<div class="a sep" style="left:1822px;top:573px"></div>
<div class="t lk" style="left:1831px;top:574px">预览</div>
<div class="a" style="left:606px;top:651px;width:1273px;height:1px;background:#e8eaec"></div>
<div class="t td" style="left:622px;top:622px">172</div>
<div class="t td" style="left:691px;top:622px">模板</div>
<div class="t td" style="left:1021px;top:622px">2024-08-30 17:00:57</div>
<div class="t td" style="left:1352px;top:622px">2024-10-10 12:02:09</div>
<div class="t lk" style="left:1684px;top:622px">编辑</div>
<div class="a sep" style="left:1716px;top:621px"></div>
<div class="t lk" style="left:1725px;top:622px">删除</div>
<div class="a sep" style="left:1757px;top:621px"></div>
<div class="t lk" style="left:1766px;top:622px">设为首页</div>
<div class="a sep" style="left:1822px;top:621px"></div>
<div class="t lk" style="left:1831px;top:622px">预览</div>
<div class="a" style="left:606px;top:651px;width:1273px;height:48px;background:#f2f7fe"></div>
<div class="a" style="left:606px;top:699px;width:1273px;height:1px;background:#e8eaec"></div>
<div class="t td" style="left:622px;top:670px">171</div>
<div class="t td" style="left:691px;top:670px">模板</div>
<div class="t td" style="left:1021px;top:670px">2024-08-30 16:29:29</div>
<div class="t td" style="left:1352px;top:670px">2024-08-30 16:29:29</div>
<div class="t lk" style="left:1684px;top:670px">编辑</div>
<div class="a sep" style="left:1716px;top:669px"></div>
<div class="t lk" style="left:1725px;top:670px">删除</div>
<div class="a sep" style="left:1757px;top:669px"></div>
<div class="t lk" style="left:1766px;top:670px">设为首页</div>
<div class="a sep" style="left:1822px;top:669px"></div>
<div class="t lk" style="left:1831px;top:670px">预览</div>
<div class="a" style="left:606px;top:747px;width:1273px;height:1px;background:#e8eaec"></div>
<div class="t td" style="left:622px;top:718px">170</div>
<div class="t td" style="left:691px;top:718px">模板</div>
<div class="t td" style="left:1021px;top:718px">2024-08-15 14:32:25</div>
<div class="t td" style="left:1352px;top:718px">2024-08-22 16:27:56</div>
<div class="t lk" style="left:1684px;top:718px">编辑</div>
<div class="a sep" style="left:1716px;top:717px"></div>
<div class="t lk" style="left:1725px;top:718px">删除</div>
<div class="a sep" style="left:1757px;top:717px"></div>
<div class="t lk" style="left:1766px;top:718px">设为首页</div>
<div class="a sep" style="left:1822px;top:717px"></div>
<div class="t lk" style="left:1831px;top:718px">预览</div>
<div class="a" style="left:606px;top:795px;width:1273px;height:1px;background:#e8eaec"></div>
<div class="t td" style="left:622px;top:766px">167</div>
<div class="t td" style="left:691px;top:766px">模板</div>
<div class="t td" style="left:1021px;top:766px">2024-07-18 16:20:11</div>
<div class="t td" style="left:1352px;top:766px">2024-08-30 15:40:40</div>
<div class="t lk" style="left:1684px;top:766px">编辑</div>
<div class="a sep" style="left:1716px;top:765px"></div>
<div class="t lk" style="left:1725px;top:766px">删除</div>
<div class="a sep" style="left:1757px;top:765px"></div>
<div class="t lk" style="left:1766px;top:766px">设为首页</div>
<div class="a sep" style="left:1822px;top:765px"></div>
<div class="t lk" style="left:1831px;top:766px">预览</div>
<div class="a" style="left:606px;top:843px;width:1273px;height:1px;background:#e8eaec"></div>
<div class="t td" style="left:622px;top:814px">166</div>
<div class="t td" style="left:691px;top:814px">模板66</div>
<div class="t td" style="left:1021px;top:814px">2024-07-13 17:00:10</div>
<div class="t td" style="left:1352px;top:814px">2024-09-10 14:27:01</div>
<div class="t lk" style="left:1684px;top:814px">编辑</div>
<div class="a sep" style="left:1716px;top:813px"></div>
<div class="t lk" style="left:1725px;top:814px">删除</div>
<div class="a sep" style="left:1757px;top:813px"></div>
<div class="t lk" style="left:1766px;top:814px">设为首页</div>
<div class="a sep" style="left:1822px;top:813px"></div>
<div class="t lk" style="left:1831px;top:814px">预览</div>
<div class="t" style="left:1528px;top:876px;font-size:14px;color:#515a6e">共 13 条</div>
<div class="a pg" style="left:1594px;top:867px"><svg style="left:11px;top:11px" width="8" height="10" viewBox="0 0 8 10"><path d="M5.5 1L1.8 5L5.5 9" fill="none" stroke="#c5c8ce" stroke-width="1.3"/></svg></div>
<div class="a pg" style="left:1634px;top:867px;border-color:#2d8cf0;color:#2d8cf0">1</div>
<div class="a pg" style="left:1673px;top:867px">2</div>
<div class="a pg" style="left:1713px;top:867px"><svg style="left:12px;top:11px" width="8" height="10" viewBox="0 0 8 10"><path d="M2.5 1L6.2 5L2.5 9" fill="none" stroke="#515a6e" stroke-width="1.3"/></svg></div>
<div class="t" style="left:1764px;top:876px;font-size:14px;color:#515a6e">跳至</div>
<div class="a" style="left:1804px;top:867px;width:50px;height:32px;border:1px solid #dcdee2;border-radius:4px"></div>
<div class="t" style="left:1812px;top:876px;font-size:14px;color:#515a6e">1</div>
<div class="t" style="left:1866px;top:876px;font-size:14px;color:#515a6e">页</div>
<!--/TABLE-->
<div class="t" style="left:938px;top:969px;font-size:14px;color:#808695">授权成功授权成功授权成功授权成功授权成功</div>
<div class="a" style="left:236px;top:147px;width:1684px;height:6px;background:linear-gradient(180deg,#e6e8ec,rgba(245,246,248,0))"></div>
<div class="a" style="left:236px;top:147px;width:5px;height:854px;background:linear-gradient(90deg,#eceef1,rgba(245,246,248,0))"></div>
<div class="a" style="left:0;top:1001px;width:1920px;height:1px;background:#fff"></div>
<div id="taskbar" class="a"><div class="a" style="left:51px;top:0;width:48px;height:8px;background:#666"></div><div class="t" style="left:1843px;top:5px;font-size:11px;color:#fff">15:40</div><div class="a" style="left:1915px;top:0;width:1px;height:8px;background:#999"></div></div>
</body></html>
